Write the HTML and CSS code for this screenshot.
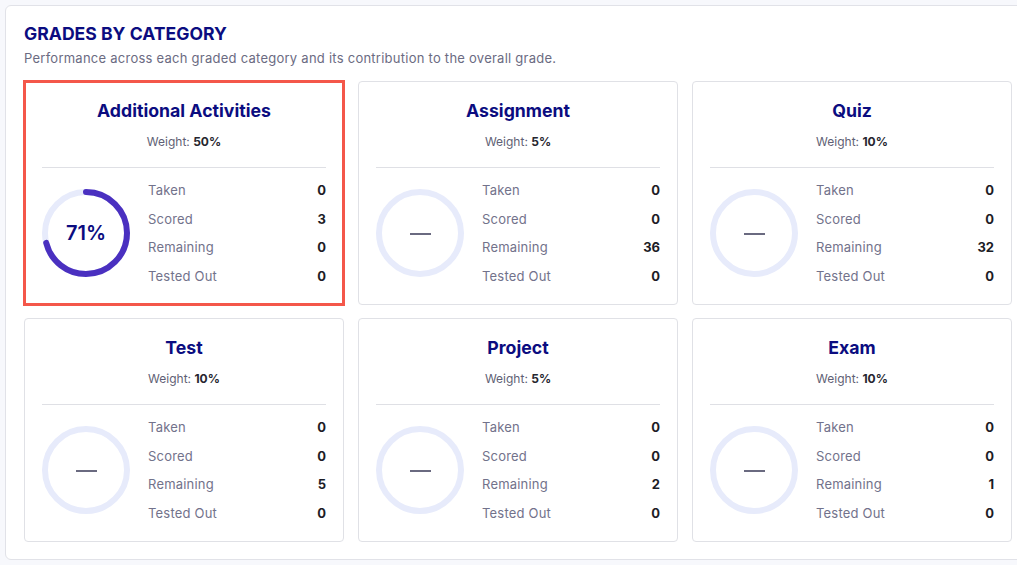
FILE: index.html
```html
<!DOCTYPE html>
<html lang="en">
<head>
    <meta charset="UTF-8">
    <meta name="viewport" content="width=device-width, initial-scale=1.0">
    <title>Grades by Category</title>
    <link rel="stylesheet" href="styles.css">
</head>
<body>
    <div class="panel">
        <h2 class="panel-title">GRADES BY CATEGORY</h2>
        <p class="panel-sub">Performance across each graded category and its contribution to the overall grade.</p>

        <div class="grid">
            <div class="cat selected">
                <h3>Additional Activities</h3>
                <p class="weight">Weight: <strong>50%</strong></p>
                <div class="cat-body">
                    <div class="ring">
                        <svg viewBox="0 0 88 88" width="88" height="88">
                            <circle class="track" cx="44" cy="44" r="41"/>
                            <circle class="arc" cx="44" cy="44" r="41" stroke-dasharray="182.9 257.6" transform="rotate(-90 44 44)"/>
                        </svg>
                        <span class="pct">71%</span>
                    </div>
                    <ul class="stats">
                        <li><span>Taken</span><b>0</b></li>
                        <li><span>Scored</span><b>3</b></li>
                        <li><span>Remaining</span><b>0</b></li>
                        <li><span>Tested Out</span><b>0</b></li>
                    </ul>
                </div>
            </div>

            <div class="cat">
                <h3>Assignment</h3>
                <p class="weight">Weight: <strong>5%</strong></p>
                <div class="cat-body">
                    <div class="ring">
                        <svg viewBox="0 0 88 88" width="88" height="88">
                            <circle class="track" cx="44" cy="44" r="41"/>
                        </svg>
                        <span class="none"></span>
                    </div>
                    <ul class="stats">
                        <li><span>Taken</span><b>0</b></li>
                        <li><span>Scored</span><b>0</b></li>
                        <li><span>Remaining</span><b>36</b></li>
                        <li><span>Tested Out</span><b>0</b></li>
                    </ul>
                </div>
            </div>

            <div class="cat">
                <h3>Quiz</h3>
                <p class="weight">Weight: <strong>10%</strong></p>
                <div class="cat-body">
                    <div class="ring">
                        <svg viewBox="0 0 88 88" width="88" height="88">
                            <circle class="track" cx="44" cy="44" r="41"/>
                        </svg>
                        <span class="none"></span>
                    </div>
                    <ul class="stats">
                        <li><span>Taken</span><b>0</b></li>
                        <li><span>Scored</span><b>0</b></li>
                        <li><span>Remaining</span><b>32</b></li>
                        <li><span>Tested Out</span><b>0</b></li>
                    </ul>
                </div>
            </div>

            <div class="cat">
                <h3>Test</h3>
                <p class="weight">Weight: <strong>10%</strong></p>
                <div class="cat-body">
                    <div class="ring">
                        <svg viewBox="0 0 88 88" width="88" height="88">
                            <circle class="track" cx="44" cy="44" r="41"/>
                        </svg>
                        <span class="none"></span>
                    </div>
                    <ul class="stats">
                        <li><span>Taken</span><b>0</b></li>
                        <li><span>Scored</span><b>0</b></li>
                        <li><span>Remaining</span><b>5</b></li>
                        <li><span>Tested Out</span><b>0</b></li>
                    </ul>
                </div>
            </div>

            <div class="cat">
                <h3>Project</h3>
                <p class="weight">Weight: <strong>5%</strong></p>
                <div class="cat-body">
                    <div class="ring">
                        <svg viewBox="0 0 88 88" width="88" height="88">
                            <circle class="track" cx="44" cy="44" r="41"/>
                        </svg>
                        <span class="none"></span>
                    </div>
                    <ul class="stats">
                        <li><span>Taken</span><b>0</b></li>
                        <li><span>Scored</span><b>0</b></li>
                        <li><span>Remaining</span><b>2</b></li>
                        <li><span>Tested Out</span><b>0</b></li>
                    </ul>
                </div>
            </div>

            <div class="cat">
                <h3>Exam</h3>
                <p class="weight">Weight: <strong>10%</strong></p>
                <div class="cat-body">
                    <div class="ring">
                        <svg viewBox="0 0 88 88" width="88" height="88">
                            <circle class="track" cx="44" cy="44" r="41"/>
                        </svg>
                        <span class="none"></span>
                    </div>
                    <ul class="stats">
                        <li><span>Taken</span><b>0</b></li>
                        <li><span>Scored</span><b>0</b></li>
                        <li><span>Remaining</span><b>1</b></li>
                        <li><span>Tested Out</span><b>0</b></li>
                    </ul>
                </div>
            </div>
        </div>
    </div>
</body>
</html>
```

FILE: styles.css
```css
* {
    margin: 0;
    padding: 0;
    box-sizing: border-box;
}

body {
    font-family: Inter, "Noto Sans", sans-serif;
    background: #f7f8fc;
    padding: 5px;
    overflow: hidden;
}

.panel {
    width: 1030px;
    height: 555px;
    background: #fff;
    border: 1px solid #e1e2e8;
    border-radius: 6px;
    padding: 17px 18px 0 18px;
}

.panel-title {
    font-size: 17.6px;
    line-height: 22px;
    font-weight: 700;
    color: #0b0c80;
}

.panel-sub {
    font-size: 13px;
    line-height: 18px;
    color: #6b6b82;
    letter-spacing: 0.25px;
    margin-top: 4px;
}

.grid {
    display: grid;
    grid-template-columns: repeat(3, 320px);
    column-gap: 14px;
    row-gap: 13px;
    margin-top: 14px;
}

.cat {
    height: 224px;
    border: 1px solid #e0e1e6;
    border-radius: 4px;
    padding: 17px 17px 0 17px;
    text-align: center;
}

.cat.selected {
    border-radius: 0;
    outline: 3px solid #f4574a;
    outline-offset: -2px;
}

.cat h3 {
    font-size: 17.7px;
    line-height: 24px;
    font-weight: 700;
    color: #0b0c80;
}

.weight {
    font-size: 12px;
    line-height: 18px;
    color: #5f5f75;
    margin-top: 10px;
    padding-bottom: 16px;
    border-bottom: 1px solid #dfe0e5;
}

.weight strong {
    color: #26262f;
    font-weight: 700;
}

.cat-body {
    display: flex;
    align-items: center;
    gap: 18px;
    padding-top: 8px;
}

.ring {
    position: relative;
    width: 88px;
    height: 88px;
    flex-shrink: 0;
}

.ring svg {
    display: block;
}

.track {
    fill: none;
    stroke: #e7ebfb;
    stroke-width: 6;
}

.arc {
    fill: none;
    stroke: #4a30c0;
    stroke-width: 6;
    stroke-linecap: round;
}

.pct {
    position: absolute;
    inset: 0;
    display: flex;
    align-items: center;
    justify-content: center;
    font-size: 20px;
    font-weight: 600;
    color: #0b0c80;
}

.none {
    position: absolute;
    left: 34px;
    top: 44px;
    width: 21px;
    height: 2px;
    background: #6a6a80;
}

.stats {
    list-style: none;
    flex: 1;
}

.stats li {
    display: flex;
    justify-content: space-between;
    font-size: 13px;
    line-height: 28.7px;
}

.stats span {
    color: #72728b;
    letter-spacing: 0.2px;
}

.stats b {
    color: #1c1c26;
    font-weight: 700;
}
```
